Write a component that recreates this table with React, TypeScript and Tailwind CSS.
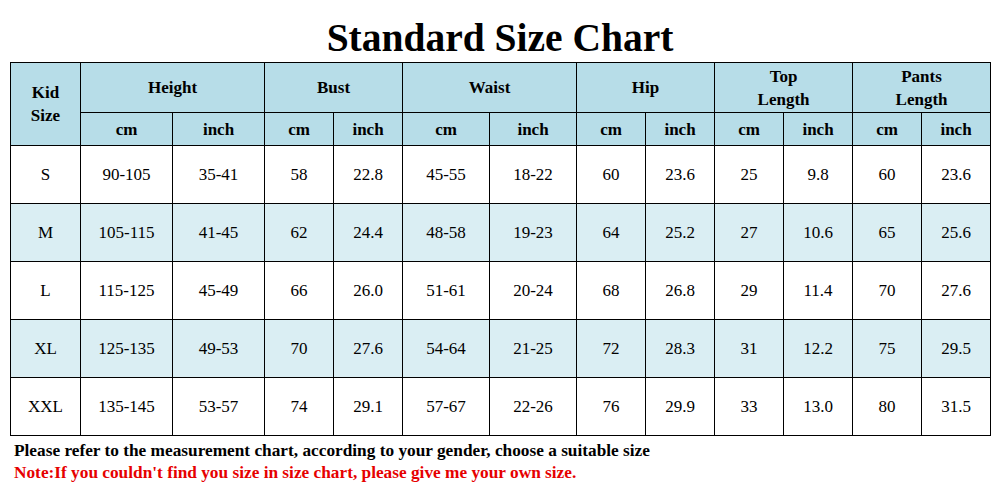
import React from "react";

const rows = [
  ["S", "90-105", "35-41", "58", "22.8", "45-55", "18-22", "60", "23.6", "25", "9.8", "60", "23.6"],
  ["M", "105-115", "41-45", "62", "24.4", "48-58", "19-23", "64", "25.2", "27", "10.6", "65", "25.6"],
  ["L", "115-125", "45-49", "66", "26.0", "51-61", "20-24", "68", "26.8", "29", "11.4", "70", "27.6"],
  ["XL", "125-135", "49-53", "70", "27.6", "54-64", "21-25", "72", "28.3", "31", "12.2", "75", "29.5"],
  ["XXL", "135-145", "53-57", "74", "29.1", "57-67", "22-26", "76", "29.9", "33", "13.0", "80", "31.5"],
];

const widths = [70, 92, 92, 69, 69, 87, 87, 69, 69, 69, 69, 69, 69];

export default function App() {
  const serif = { fontFamily: '"Liberation Serif", "Times New Roman", serif' };
  return (
    <div className="w-[1000px] h-[496px] bg-white text-black overflow-hidden" style={serif}>
      <div className="h-[62px] pt-[19px] text-center text-[39.5px] leading-[39px] font-bold">
        Standard Size Chart
      </div>
      <table className="ml-[10px] w-[980px] border-collapse table-fixed text-center">
        <colgroup>
          {widths.map((w, i) => (
            <col key={i} style={{ width: w }} />
          ))}
        </colgroup>
        <thead className="bg-[#b7dde8] font-bold text-[17px] leading-[23px]">
          <tr className="h-[50px]">
            <th rowSpan={2} className="border border-black font-bold p-0">
              Kid
              <br />
              Size
            </th>
            <th colSpan={2} className="border border-black font-bold p-0">Height</th>
            <th colSpan={2} className="border border-black font-bold p-0">Bust</th>
            <th colSpan={2} className="border border-black font-bold p-0">Waist</th>
            <th colSpan={2} className="border border-black font-bold p-0">Hip</th>
            <th colSpan={2} className="border border-black font-bold p-0">
              Top
              <br />
              Length
            </th>
            <th colSpan={2} className="border border-black font-bold p-0">
              Pants
              <br />
              Length
            </th>
          </tr>
          <tr className="h-[33px]">
            {Array.from({ length: 6 }).flatMap((_, i) => [
              <th key={`c${i}`} className="border border-black font-bold p-0">cm</th>,
              <th key={`i${i}`} className="border border-black font-bold p-0">inch</th>,
            ])}
          </tr>
        </thead>
        <tbody className="text-[17px]">
          {rows.map((r, ri) => (
            <tr key={ri} className={`h-[58px] ${ri % 2 === 1 ? "bg-[#daeef3]" : "bg-white"}`}>
              {r.map((c, ci) => (
                <td key={ci} className="border border-black p-0">
                  {c}
                </td>
              ))}
            </tr>
          ))}
        </tbody>
      </table>
      <div className="pl-[14px] mt-[4px] text-[17.3px] leading-[22px] font-bold">
        <div>Please refer to the measurement chart, according to your gender, choose a suitable size</div>
        <div className="text-[#e60000]">Note:If you couldn't find you size in size chart, please give me your own size.</div>
      </div>
    </div>
  );
}
